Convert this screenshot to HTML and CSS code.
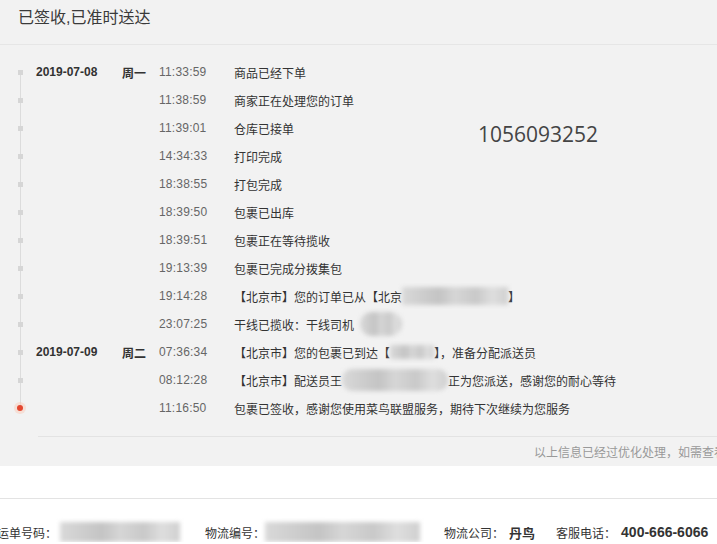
FILE: index.html
```html
<!DOCTYPE html>
<html lang="zh-CN">
<head>
    <meta charset="UTF-8">
    <meta name="viewport" content="width=device-width, initial-scale=1.0">
    <title>物流详情</title>
    <link rel="stylesheet" href="styles.css">
</head>
<body>

    <div class="panel">
        <div class="head">已签收,已准时送达</div>

        <ul class="track">
            <li><span class="date">2019-07-08</span><span class="week">周一</span><span class="time">11:33:59</span><span class="msg">商品已经下单</span></li>
            <li><span class="date"></span><span class="week"></span><span class="time">11:38:59</span><span class="msg">商家正在处理您的订单</span></li>
            <li><span class="date"></span><span class="week"></span><span class="time">11:39:01</span><span class="msg">仓库已接单</span></li>
            <li><span class="date"></span><span class="week"></span><span class="time">14:34:33</span><span class="msg">打印完成</span></li>
            <li><span class="date"></span><span class="week"></span><span class="time">18:38:55</span><span class="msg">打包完成</span></li>
            <li><span class="date"></span><span class="week"></span><span class="time">18:39:50</span><span class="msg">包裹已出库</span></li>
            <li><span class="date"></span><span class="week"></span><span class="time">18:39:51</span><span class="msg">包裹正在等待揽收</span></li>
            <li><span class="date"></span><span class="week"></span><span class="time">19:13:39</span><span class="msg">包裹已完成分拨集包</span></li>
            <li><span class="date"></span><span class="week"></span><span class="time">19:14:28</span><span class="msg">【北京市】您的订单已从【北京<i class="blur wide"></i>】</span></li>
            <li><span class="date"></span><span class="week"></span><span class="time">23:07:25</span><span class="msg">干线已揽收：干线司机<i class="blur pill"></i></span></li>
            <li><span class="date">2019-07-09</span><span class="week">周二</span><span class="time">07:36:34</span><span class="msg">【北京市】您的包裹已到达【<i class="blur box"></i>】，准备分配派送员</span></li>
            <li><span class="date"></span><span class="week"></span><span class="time">08:12:28</span><span class="msg">【北京市】配送员王<i class="blur name"></i>正为您派送，感谢您的耐心等待</span></li>
            <li class="last"><span class="date"></span><span class="week"></span><span class="time">11:16:50</span><span class="msg">包裹已签收，感谢您使用菜鸟联盟服务，期待下次继续为您服务</span></li>
        </ul>

        <div class="mark">1056093252</div>

        <div class="note">以上信息已经过优化处理，如需查看详细物流信息请联系物流公司</div>
    </div>

    <div class="info">
        <span class="label first">运单号码：</span><i class="blur code"></i>
        <span class="label second">物流编号：</span><i class="blur code long"></i>
        <span class="label third">物流公司：</span><b>丹鸟</b>
        <span class="label fourth">客服电话：</span><b class="phone">400-666-6066</b>
    </div>

</body>
</html>
```

FILE: styles.css
```css
body {
    margin: 0;
    width: 717px;
    overflow: hidden;
    font-family: "Liberation Sans", Arial, "Noto Sans CJK SC", sans-serif;
    font-size: 12px;
    color: #333333;
    background: #ffffff;
}
.panel {
    position: relative;
    height: 466px;
    background: #f2f2f2;
}
.head {
    height: 44px;
    padding: 0 0 0 18px;
    line-height: 36px;
    font-size: 16px;
    color: #3a3a3a;
    border-bottom: 1px solid #e6e6e6;
}
.track {
    position: relative;
    list-style: none;
    margin: 0;
    padding: 13px 0 14px 0;
}
.track::before {
    content: "";
    position: absolute;
    left: 20px;
    top: 27px;
    bottom: 30px;
    border-left: 1px solid #dcdcdc;
}
.track li {
    position: relative;
    display: flex;
    align-items: center;
    height: 28px;
    padding-left: 36px;
    white-space: nowrap;
}
.track li::before {
    content: "";
    position: absolute;
    left: 18px;
    top: 12px;
    width: 5px;
    height: 5px;
    background: #d6d6d6;
}
.track li.last::before {
    left: 17px;
    top: 11px;
    width: 6px;
    height: 6px;
    border-radius: 50%;
    background: #e4472f;
    box-shadow: 0 0 0 3px rgba(250, 200, 180, 0.45);
}
.date {
    width: 86px;
    font-weight: bold;
}
.week {
    width: 37px;
    font-weight: bold;
    font-family: "Noto Sans CJK SC", sans-serif;
}
.time {
    width: 75px;
    color: #666666;
    letter-spacing: 0.2px;
}
.msg {
    font-family: "Noto Sans CJK SC", sans-serif;
    display: flex;
    align-items: center;
}
.blur {
    display: inline-block;
    height: 18px;
    background: linear-gradient(to right, #d9d9d9 0, #cdcdcd 20%, #c4c4c4 35%, #d6d6d6 50%, #c9c9c9 70%, #dedede 85%, #d0d0d0 100%);
    filter: blur(2px);
}
.blur.wide {
    width: 106px;
}
.blur.pill {
    width: 42px;
    height: 24px;
    margin-left: 6px;
    border-radius: 12px;
}
.blur.box {
    width: 44px;
    height: 14px;
}
.blur.name {
    width: 106px;
    height: 22px;
    border-radius: 10px;
}
.mark {
    position: absolute;
    left: 478px;
    top: 120px;
    font-family: "Open Sans", sans-serif;
    font-size: 21px;
    color: #444444;
}
.note {
    margin-left: 38px;
    border-top: 1px solid #e3e3e3;
    padding: 7px 0 0 496px;
    line-height: 16px;
    color: #999999;
    font-family: "Noto Sans CJK SC", sans-serif;
    white-space: nowrap;
    overflow: hidden;
}
.info {
    margin-top: 32px;
    border-top: 1px solid #e3e3e3;
    padding-top: 23px;
    display: flex;
    align-items: center;
    white-space: nowrap;
    font-family: "Noto Sans CJK SC", sans-serif;
    font-size: 12px;
    color: #333333;
}
.label.first {
    margin-left: -3px;
}
.label.second {
    margin-left: 25px;
}
.label.third {
    margin-left: 24px;
}
.label.fourth {
    margin-left: 21px;
}
.blur.code {
    width: 120px;
    height: 20px;
    margin-left: 3px;
}
.blur.code.long {
    width: 155px;
    margin-left: 0;
}
.info b {
    font-weight: bold;
    font-size: 13px;
    margin-left: 5px;
}
.info .phone {
    font-family: "Liberation Sans", Arial, sans-serif;
    font-size: 14px;
}
```
